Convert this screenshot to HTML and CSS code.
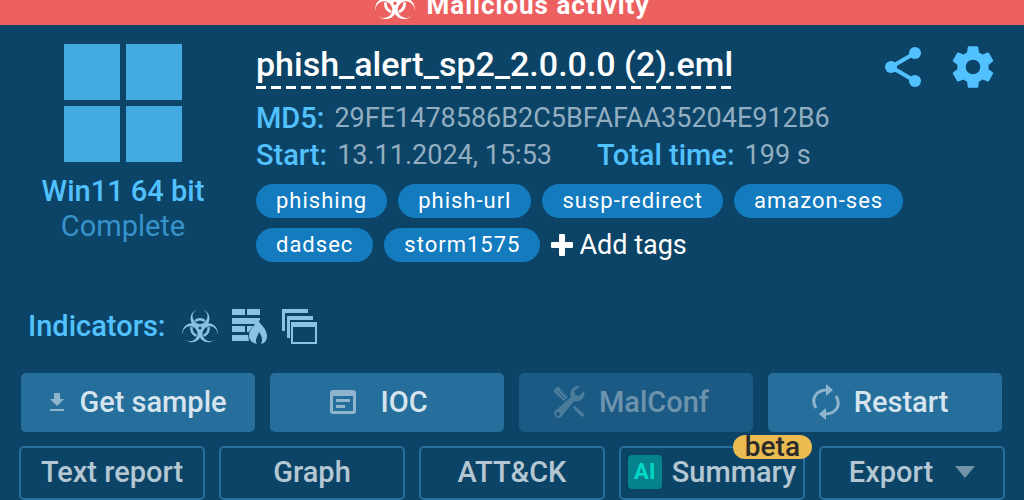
FILE: index.html
```
<!DOCTYPE html>
<html lang="en">
<head>
  <meta charset="UTF-8">
  <meta name="viewport" content="width=device-width, initial-scale=1.0">
  <title>phish_alert_sp2_2.0.0.0 (2).eml</title>
  <link rel="stylesheet" href="styles.css">
</head>
<body>
  <!-- shared icon shapes -->
  <svg class="defs" aria-hidden="true">
    <defs>
      <mask id="lobes" maskUnits="userSpaceOnUse" x="-2" y="-2" width="40" height="40">
        <rect x="-2" y="-2" width="40" height="40" fill="#fff"/>
        <g fill="#000">
          <circle cx="18" cy="8.500" r="7.500"/>
          <circle cx="18" cy="8.500" r="7.500" transform="rotate(120 18 20)"/>
          <circle cx="18" cy="8.500" r="7.500" transform="rotate(240 18 20)"/>
          <path d="M14.500 0h7v6h-7z"/>
          <path d="M14.500 0h7v6h-7z" transform="rotate(120 18 20)"/>
          <path d="M14.500 0h7v6h-7z" transform="rotate(240 18 20)"/>
          <circle cx="18" cy="20" r="1.500"/>
        </g>
      </mask>
      <symbol id="biohazard" viewBox="0 0 36 36" overflow="visible">
        <g mask="url(#lobes)">
          <circle cx="18" cy="10.500" r="9.500"/>
          <circle cx="18" cy="10.500" r="9.500" transform="rotate(120 18 20)"/>
          <circle cx="18" cy="10.500" r="9.500" transform="rotate(240 18 20)"/>
        </g>
        <g fill="none" stroke="currentColor" stroke-width="2.500">
          <path d="M13 13a8.600 8.600 0 0 1 10 0"/>
          <path d="M13 13a8.600 8.600 0 0 1 10 0" transform="rotate(120 18 20)"/>
          <path d="M13 13a8.600 8.600 0 0 1 10 0" transform="rotate(240 18 20)"/>
        </g>
      </symbol>
    </defs>
  </svg>

  <div class="verdict">
    <svg class="verdict_icon" viewBox="0 0 36 36"><use href="#biohazard"/></svg>
    <span>Malicious activity</span>
  </div>

  <header class="task">
    <div class="system">
      <svg class="windows" viewBox="0 0 118 118">
        <path d="M0 0h56v56H0zM62 0h56v56H62zM0 62h56v56H0zM62 62h56v56H62z"/>
      </svg>
      <div class="os">Win11 64 bit</div>
      <div class="status">Complete</div>
    </div>

    <div class="info">
      <div class="top">
        <h1 class="name">phish_alert_sp2_2.0.0.0 (2).eml</h1>
        <div class="tools">
          <button aria-label="Share">
            <svg width="38" height="42" viewBox="0 0 38 42">
              <path d="M31 7 7 21l24 14" fill="none" stroke="currentColor" stroke-width="4"/>
              <circle cx="31" cy="7" r="6"/><circle cx="7" cy="21" r="6"/><circle cx="31" cy="35" r="6"/>
            </svg>
          </button>
          <button aria-label="Settings">
            <svg width="50" height="50" viewBox="0 0 24 24">
              <path d="M19.430 12.980c.04-.32.070-.64.070-.98s-.03-.66-.07-.98l2.110-1.650c.19-.15.24-.42.120-.64l-2-3.460c-.12-.22-.39-.3-.61-.22l-2.490 1c-.52-.4-1.080-.73-1.690-.98l-.38-2.650C14.460 2.180 14.250 2 14 2h-4c-.25 0-.46.18-.49.420l-.38 2.650c-.61.25-1.170.59-1.690.98l-2.490-1c-.23-.09-.49 0-.61.22l-2 3.460c-.13.22-.07.49.12.64l2.110 1.650c-.04.32-.07.65-.07.98s.03.66.07.98l-2.110 1.650c-.19.15-.24.42-.12.64l2 3.460c.12.22.39.3.61.22l2.490-1c.52.4 1.080.73 1.690.98l.38 2.650c.03.24.24.42.49.42h4c.25 0 .46-.18.49-.42l.38-2.650c.61-.25 1.170-.59 1.690-.98l2.490 1c.23.09.49 0 .61-.22l2-3.460c.12-.22.07-.49-.12-.64zM12 15.500a3.500 3.500 0 1 1 0-7 3.500 3.500 0 0 1 0 7z"/>
            </svg>
          </button>
        </div>
      </div>
      <div class="row"><b>MD5:</b><span>29FE1478586B2C5BFAFAA35204E912B6</span></div>
      <div class="row">
        <b>Start:</b><span class="start">13.11.2024, 15:53</span>
        <b>Total time:</b><span>199 s</span>
      </div>
      <div class="tags">
        <a class="tag" href="#">phishing</a>
        <a class="tag" href="#">phish-url</a>
        <a class="tag" href="#">susp-redirect</a>
        <a class="tag" href="#">amazon-ses</a>
        <a class="tag" href="#">dadsec</a>
        <a class="tag" href="#">storm1575</a>
        <button class="add">
          <svg width="22" height="22" viewBox="0 0 22 22"><path d="M9 0h4q1 0 1 1v7h7q1 0 1 1v4q0 1-1 1h-7v7q0 1-1 1H9q-1 0-1-1v-7H1q-1 0-1-1V9q0-1 1-1h7V1q0-1 1-1z"/></svg>
          Add tags
        </button>
      </div>
    </div>
  </header>

  <section class="indicators">
    <span class="label">Indicators:</span>
    <svg width="36" height="36" viewBox="0 0 36 36"><use href="#biohazard"/></svg>
    <svg width="36" height="36" viewBox="0 0 36 36">
      <path d="M0 1h13v6H0zM15 1h13v6H15zM0 10h28v2l-5 4H0zM0 18h13v6H0zM15 18h6l-4 6h-2zM0 27h16l1 6H0z"/>
      <path d="M25 10c2 6 10 10 10 18 0 4-2 7-6 8 2-4 1-8-2-12-1 5-5 7-2 12-5-1-8-4-8-8 0-7 7-10 8-18z"/>
    </svg>
    <svg width="36" height="36" viewBox="0 0 36 36">
      <path d="M0 1h26v4H3v18H0zM5 8h26v4H8v18H5zM9 14h26v22H9zM11 19v15h22V19z" fill-rule="evenodd"/>
    </svg>
  </section>

  <div class="actions">
    <button class="btn">
      <svg width="16" height="20" viewBox="0 0 16 20"><path d="M5 1h6v6h4l-7 7-7-7h4zM1 17h14v2H1z"/></svg>
      Get sample
    </button>
    <button class="btn ioc">
      <svg width="26" height="24" viewBox="0 0 26 24"><path fill-rule="evenodd" d="M3 0h20q3 0 3 3v18q0 3-3 3H3q-3 0-3-3V3q0-3 3-3zM3 6v15h20V6zM6 9h14v3H6zM6 15h9v3H6z"/></svg>
      IOC
    </button>
    <button class="btn wide" disabled>
      <svg width="32" height="32" viewBox="0 0 32 32">
        <path d="M27 0c-7-1-11 5-9 11L2 25c-3 4 2 9 6 6l13-16c6 2 12-3 10-10l-5 5-4-1-1-4zM5 26a2 2 0 1 1 0 4 2 2 0 0 1 0-4z" fill-rule="evenodd"/>
        <path d="M1 4 4 1q1-1 3 1l8 9-4 4-9-8q-2-2-1-3zM20 20l2 0 8 7 2 4-4-1-7-7z"/>
        <path d="m4 5 8 8M7 3l7 8" stroke="#1a5a84" fill="none"/>
      </svg>
      MalConf
    </button>
    <button class="btn wide">
      <svg width="28" height="36" viewBox="0 0 28 36">
        <path d="M4 24C-2 14 5 6 15 6M24 12c6 10-1 18-11 18" fill="none" stroke="currentColor" stroke-width="3"/>
        <path d="m14 0 7 6-7 6zM14 24l-7 6 7 6z"/>
      </svg>
      Restart
    </button>
  </div>

  <div class="reports">
    <button class="btn outline">Text report</button>
    <button class="btn outline">Graph</button>
    <button class="btn outline">ATT&amp;CK</button>
    <button class="btn outline summary"><span class="ai">AI</span>Summary<span class="beta">beta</span></button>
    <button class="btn outline export">Export
      <svg width="20" height="12" viewBox="0 0 20 12"><path d="M0 0h20L10 12z"/></svg>
    </button>
  </div>
</body>
</html>
```

FILE: styles.css
```
*{
  box-sizing: border-box;
}
body{
  margin: 0;
  background-color: #0c4467;
  color: #fff;
  font-family: Roboto, sans-serif;
  font-size: 29px;
}
button{
  padding: 0;
  border: 0;
  background: none;
  color: inherit;
  font: inherit;
}
svg{
  flex: none;
  fill: currentColor;
}
.defs{
  position: absolute;
  width: 0;
  height: 0;
}
/* verdict bar, scrolled partly out of view */
.verdict{
  display: flex;
  justify-content: center;
  align-items: flex-end;
  gap: 12px;
  height: 25px;
  padding-bottom: 4px;
  overflow: hidden;
  background-color: #ec615f;
  font-size: 26px;
  font-weight: 700;
  line-height: 32px;
  letter-spacing: 1px;
}
.verdict_icon{
  width: 40px;
  height: 40px;
}
.task{
  display: flex;
  padding: 19px 26px 0 20px;
}
.system{
  width: 206px;
  margin-right: 30px;
  text-align: center;
  line-height: 35px;
}
.windows{
  display: block;
  width: 118px;
  margin: 0 auto 12px;
  color: #42a9e3;
}
.os{
  color: #51c1ff;
  font-weight: 500;
}
.status{
  color: #3793ca;
}
.info{
  flex: 1;
}
.top{
  display: flex;
  justify-content: space-between;
  align-items: flex-start;
  margin-bottom: 11px;
}
.name{
  margin: 0;
  padding-bottom: 4px;
  background: repeating-linear-gradient(90deg, #fff 0 10px, transparent 10px 15px) bottom / 100% 3px no-repeat;
  font-size: 34px;
  font-weight: 500;
  line-height: 41px;
}
.row{
  display: flex;
  gap: 10px;
  color: #92aec0;
  font-size: 27px;
  line-height: 37px;
}
.row b{
  color: #51c1ff;
  font-size: 29px;
  font-weight: 500;
}
.start{
  margin-right: 35px;
}
.tags{
  display: flex;
  flex-wrap: wrap;
  gap: 10px 11px;
  margin-top: 10px;
}
.tag{
  padding: 0 20px;
  border-radius: 17px;
  background-color: #147bbf;
  color: #fff;
  font-size: 22px;
  line-height: 34px;
  letter-spacing: 1px;
  text-decoration: none;
}
.add{
  display: flex;
  align-items: center;
  gap: 6px;
  font-size: 27px;
}
.tools{
  display: flex;
  align-items: center;
  gap: 26px;
  height: 45px;
  color: #51c1ff;
}
.tools button{
  display: flex;
}
.indicators{
  display: flex;
  align-items: center;
  gap: 14px;
  padding: 46px 28px 29px;
  color: #8bc3e4;
}
.label{
  margin-right: 3px;
  color: #51c1ff;
  font-weight: 500;
}
.actions{
  display: grid;
  grid-template-columns: repeat(4, 1fr);
  gap: 15px;
  padding: 0 22px 14px 21px;
}
.btn{
  display: flex;
  justify-content: center;
  align-items: center;
  gap: 14px;
  height: 59px;
  padding-bottom: 2px;
  border-radius: 5px;
  background-color: #266e9b;
  color: #d5e4ee;
  font-weight: 500;
}
.btn svg{
  opacity: .6;
}
.btn:disabled{
  background-color: #1a5a84;
  color: #6d93ad;
}
.wide{
  padding-right: 10px;
}
.ioc{
  gap: 24px;
  padding-right: 16px;
}
.reports{
  display: grid;
  grid-template-columns: repeat(5, 1fr);
  gap: 14px;
  padding: 0 19px;
}
.outline{
  height: 54px;
  border: 2px solid #266e9b;
  background: none;
  color: #b4c7d3;
}
.summary{
  position: relative;
  gap: 10px;
}
.ai{
  width: 34px;
  border-radius: 4px;
  background-color: #06818e;
  color: #00d9c5;
  font-size: 22px;
  font-weight: 700;
  line-height: 34px;
}
.beta{
  position: absolute;
  top: -13px;
  right: -9px;
  padding: 0 12px;
  border-radius: 12px;
  background-color: #e9bb50;
  color: #2b2b2b;
  font-size: 28px;
  line-height: 24px;
}
.export{
  gap: 22px;
}
```
